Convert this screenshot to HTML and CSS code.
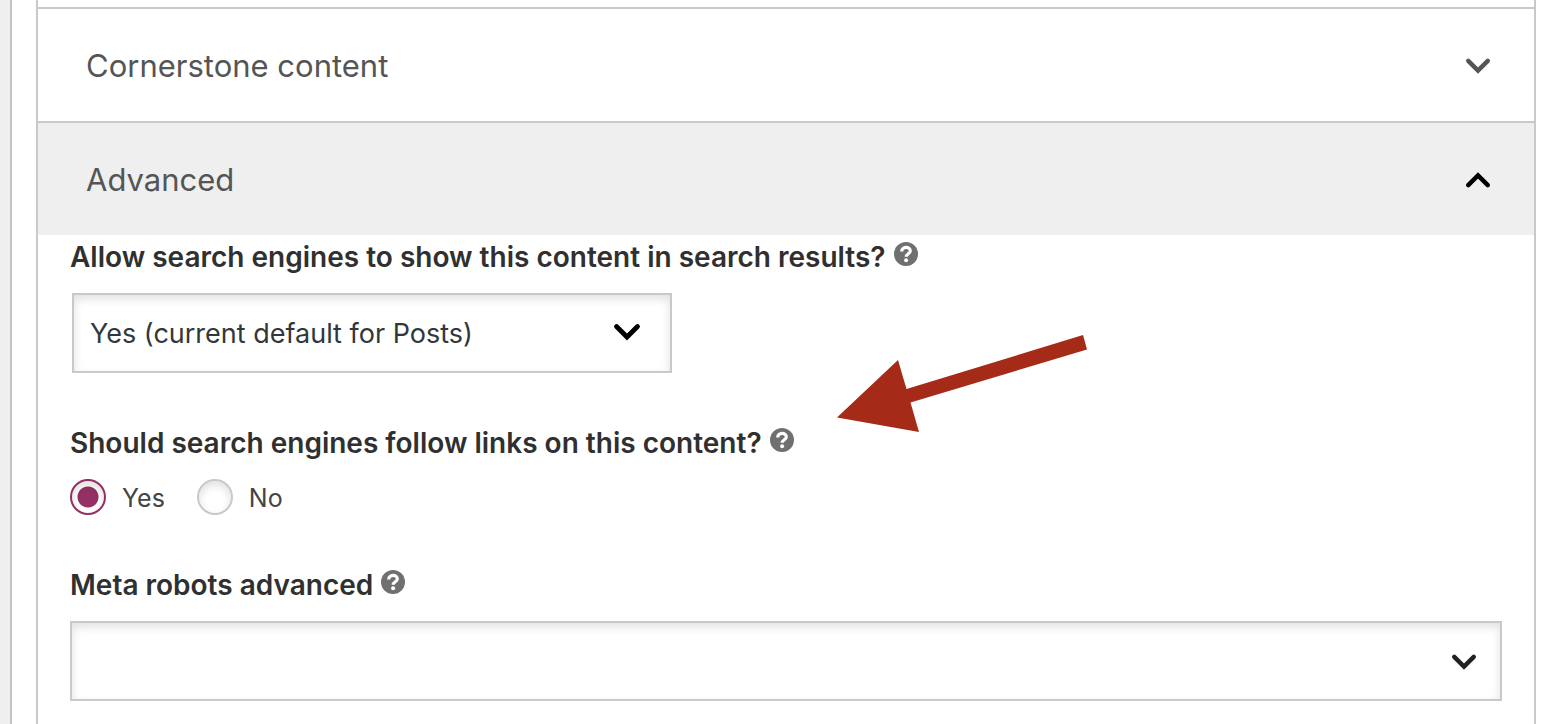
FILE: index.html
```html
<!DOCTYPE html>
<html lang="en">
  <head>
    <meta charset="utf-8">
    <title>Advanced settings</title>
    <link rel="stylesheet" href="styles.css">
  </head>
  <body>
    <svg class="defs" width="0" height="0" aria-hidden="true">
      <symbol id="chevron-down" viewBox="0 0 28 18">
        <path d="M3.5 3.5 L14 14 L24.5 3.5" fill="none" stroke="currentColor" stroke-width="4.8" stroke-linecap="round"/>
      </symbol>
      <symbol id="help" viewBox="0 0 24 24">
        <circle cx="12" cy="12" r="12" fill="currentColor"/>
        <path d="M7.7 9.4 C7.7 4.1 16.3 4.1 16.3 8.9 C16.3 11.8 12.2 11.7 12.2 14.8" fill="none" stroke="#fff" stroke-width="3.2"/>
        <circle cx="12.1" cy="18.3" r="2" fill="#fff"/>
      </symbol>
    </svg>

    <main class="metabox">
      <div class="sections">
        <h2 class="section-title">
          <button type="button" class="toggle" aria-expanded="false">
            Cornerstone content
            <svg class="toggle-icon"><use href="#chevron-down"/></svg>
          </button>
        </h2>
        <h2 class="section-title">
          <button type="button" class="toggle open" aria-expanded="true">
            Advanced
            <svg class="toggle-icon"><use href="#chevron-down"/></svg>
          </button>
        </h2>

        <form class="section-body">
          <div class="field">
            <div class="field-head">
              <label for="noindex">Allow search engines to show this content in search results?</label>
              <button type="button" class="help" aria-label="Help"><svg><use href="#help"/></svg></button>
            </div>
            <div class="select-box small">
              <select id="noindex" name="noindex">
                <option>Yes (current default for Posts)</option>
              </select>
              <svg class="select-icon"><use href="#chevron-down"/></svg>
            </div>
          </div>

          <div class="field" role="radiogroup" aria-labelledby="follow_label">
            <div class="field-head">
              <span id="follow_label">Should search engines follow links on this content?</span>
              <button type="button" class="help" aria-label="Help"><svg><use href="#help"/></svg></button>
            </div>
            <div class="radios">
              <input type="radio" id="follow_yes" name="follow" value="yes" checked>
              <label for="follow_yes">Yes</label>
              <input type="radio" id="follow_no" name="follow" value="no">
              <label for="follow_no">No</label>
            </div>
          </div>

          <div class="field">
            <div class="field-head">
              <label for="robots">Meta robots advanced</label>
              <button type="button" class="help" aria-label="Help"><svg><use href="#help"/></svg></button>
            </div>
            <div class="select-box wide">
              <select id="robots" name="robots">
                <option></option>
              </select>
              <svg class="select-icon"><use href="#chevron-down"/></svg>
            </div>
          </div>

          <!-- arrow pointing at the follow question -->
          <svg class="pointer" viewBox="0 0 250 97" aria-hidden="true">
            <path d="M0 82.5 L61 25 L69.5 54 L246 0 L250 14.5 L73.5 67.5 L82 97 Z" fill="#a52a18"/>
          </svg>
        </form>
      </div>
    </main>
  </body>
</html>
```
FILE: styles.css
```css
* {
  box-sizing: border-box;
}

body {
  margin: 0;
  background: #efefef;
  color: #303030;
  font-family: Inter, "Liberation Sans", sans-serif;
}

.defs {
  position: absolute;
}

.metabox {
  display: flex;
  min-height: 100vh;
  margin-left: 10px;
  padding: 0 16px 0 24px;
  border-left: 2px solid #c3c3c3;
  background: #fff;
}

.sections {
  flex: 1;
  padding-top: 7px;
  border: solid #c9c9c9;
  border-width: 0 2px;
}

.section-title {
  margin: 0;
  border-top: 2px solid #c9c9c9;
}

.toggle {
  display: flex;
  align-items: center;
  justify-content: space-between;
  width: 100%;
  height: 112px;
  padding: 2px 43px 0 48px;
  border: 0;
  background: #fff;
  color: #555;
  font: 400 31px/40px Inter, "Liberation Sans", sans-serif;
  text-align: left;
}

.toggle.open {
  background: #efefef;
}

.toggle-icon {
  width: 26px;
  height: 18px;
}

.open .toggle-icon {
  color: #000;
  transform: rotate(180deg);
}

.section-body {
  position: relative;
  padding: 0 32px 23px;
}

.field + .field {
  margin-top: 48px;
}

.field-head {
  display: flex;
  align-items: center;
  gap: 8px;
  margin-bottom: 14px;
  font-size: 28px;
  font-weight: 600;
  line-height: 44px;
}

.help {
  width: 24px;
  height: 24px;
  margin-bottom: 6px;
  padding: 0;
  border: 0;
  background: none;
  color: #707070;
}

.help svg {
  display: block;
  width: 24px;
  height: 24px;
}

.select-box {
  position: relative;
}

.select-box select {
  display: block;
  width: 100%;
  height: 80px;
  padding: 2px 64px 0 16px;
  border: 2px solid #c9c9c9;
  border-radius: 0;
  background: #fff;
  box-shadow: inset 0 4px 10px rgba(0, 0, 0, 0.12);
  color: #32373c;
  font: 400 27px/40px Inter, "Liberation Sans", sans-serif;
  appearance: none;
}

.select-box.small {
  max-width: 600px;
  margin-left: 2px;
}

.select-icon {
  position: absolute;
  top: 32px;
  right: 25px;
  width: 26px;
  height: 18px;
  color: #222;
  pointer-events: none;
}

.small .select-icon {
  top: 30px;
  right: 31px;
  width: 28px;
  color: #000;
}

.radios {
  display: flex;
  align-items: center;
  gap: 16px;
  height: 36px;
  color: #444;
  font-size: 25px;
}

.radios label {
  padding-top: 2px;
}

.radios label + input {
  margin-left: 16px;
}

.radios input {
  width: 36px;
  height: 36px;
  margin: 0;
  border: 2px solid #c9c9c9;
  border-radius: 50%;
  background: #fff;
  box-shadow: inset 0 4px 8px rgba(0, 0, 0, 0.12);
  appearance: none;
}

.radios input:checked {
  border-color: #943063;
  background: radial-gradient(circle, #943063 10px, #fff 11px);
}

.pointer {
  position: absolute;
  top: 100px;
  left: 799px;
  width: 250px;
  height: 97px;
}
```
